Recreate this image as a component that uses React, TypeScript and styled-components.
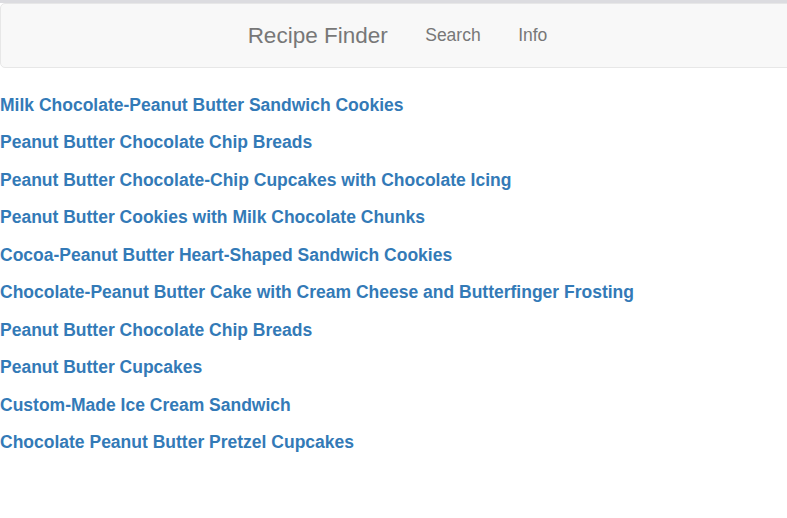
import styled, { createGlobalStyle } from "styled-components";

const GlobalStyle = createGlobalStyle`
  html, body {
    margin: 0;
    padding: 0;
    background: #fff;
    overflow-x: hidden;
  }
  body {
    font-family: "Liberation Sans", Arial, Helvetica, sans-serif;
    font-size: 17.5px;
    color: #333;
    border-top: 3px solid #dcdce0;
  }
`;

const Navbar = styled.nav`
  height: 62.5px;
  margin-right: -8px;
  background-color: #f8f8f8;
  border: 1px solid #e7e7e7;
  border-radius: 5px;
  display: flex;
  justify-content: center;
  align-items: center;
`;

const Brand = styled.a`
  padding: 0 18.75px;
  font-size: 22.5px;
  line-height: 25px;
  color: #777;
  text-decoration: none;
  cursor: pointer;
`;

const NavList = styled.ul`
  display: flex;
  list-style: none;
  margin: 0;
  padding: 0;
`;

const NavItem = styled.li`
  padding: 0 18.75px;
  font-size: 17.5px;
  line-height: 25px;
  color: #777;
  cursor: pointer;
`;

const RecipeList = styled.div`
  margin-top: 19px;
`;

const RecipeLink = styled.a`
  display: block;
  height: 37.5px;
  line-height: 37.5px;
  font-size: 17.5px;
  font-weight: 700;
  color: #337ab7;
  text-decoration: none;
  white-space: nowrap;
  cursor: pointer;
  &:hover {
    text-decoration: underline;
  }
`;

const recipes = [
  "Milk Chocolate-Peanut Butter Sandwich Cookies",
  "Peanut Butter Chocolate Chip Breads",
  "Peanut Butter Chocolate-Chip Cupcakes with Chocolate Icing",
  "Peanut Butter Cookies with Milk Chocolate Chunks",
  "Cocoa-Peanut Butter Heart-Shaped Sandwich Cookies",
  "Chocolate-Peanut Butter Cake with Cream Cheese and Butterfinger Frosting",
  "Peanut Butter Chocolate Chip Breads",
  "Peanut Butter Cupcakes",
  "Custom-Made Ice Cream Sandwich",
  "Chocolate Peanut Butter Pretzel Cupcakes",
];

export default function App() {
  return (
    <>
      <GlobalStyle />
      <Navbar>
        <Brand>Recipe Finder</Brand>
        <NavList>
          <NavItem>Search</NavItem>
          <NavItem>Info</NavItem>
        </NavList>
      </Navbar>
      <RecipeList>
        {recipes.map((title, i) => (
          <RecipeLink key={i}>{title}</RecipeLink>
        ))}
      </RecipeList>
    </>
  );
}
